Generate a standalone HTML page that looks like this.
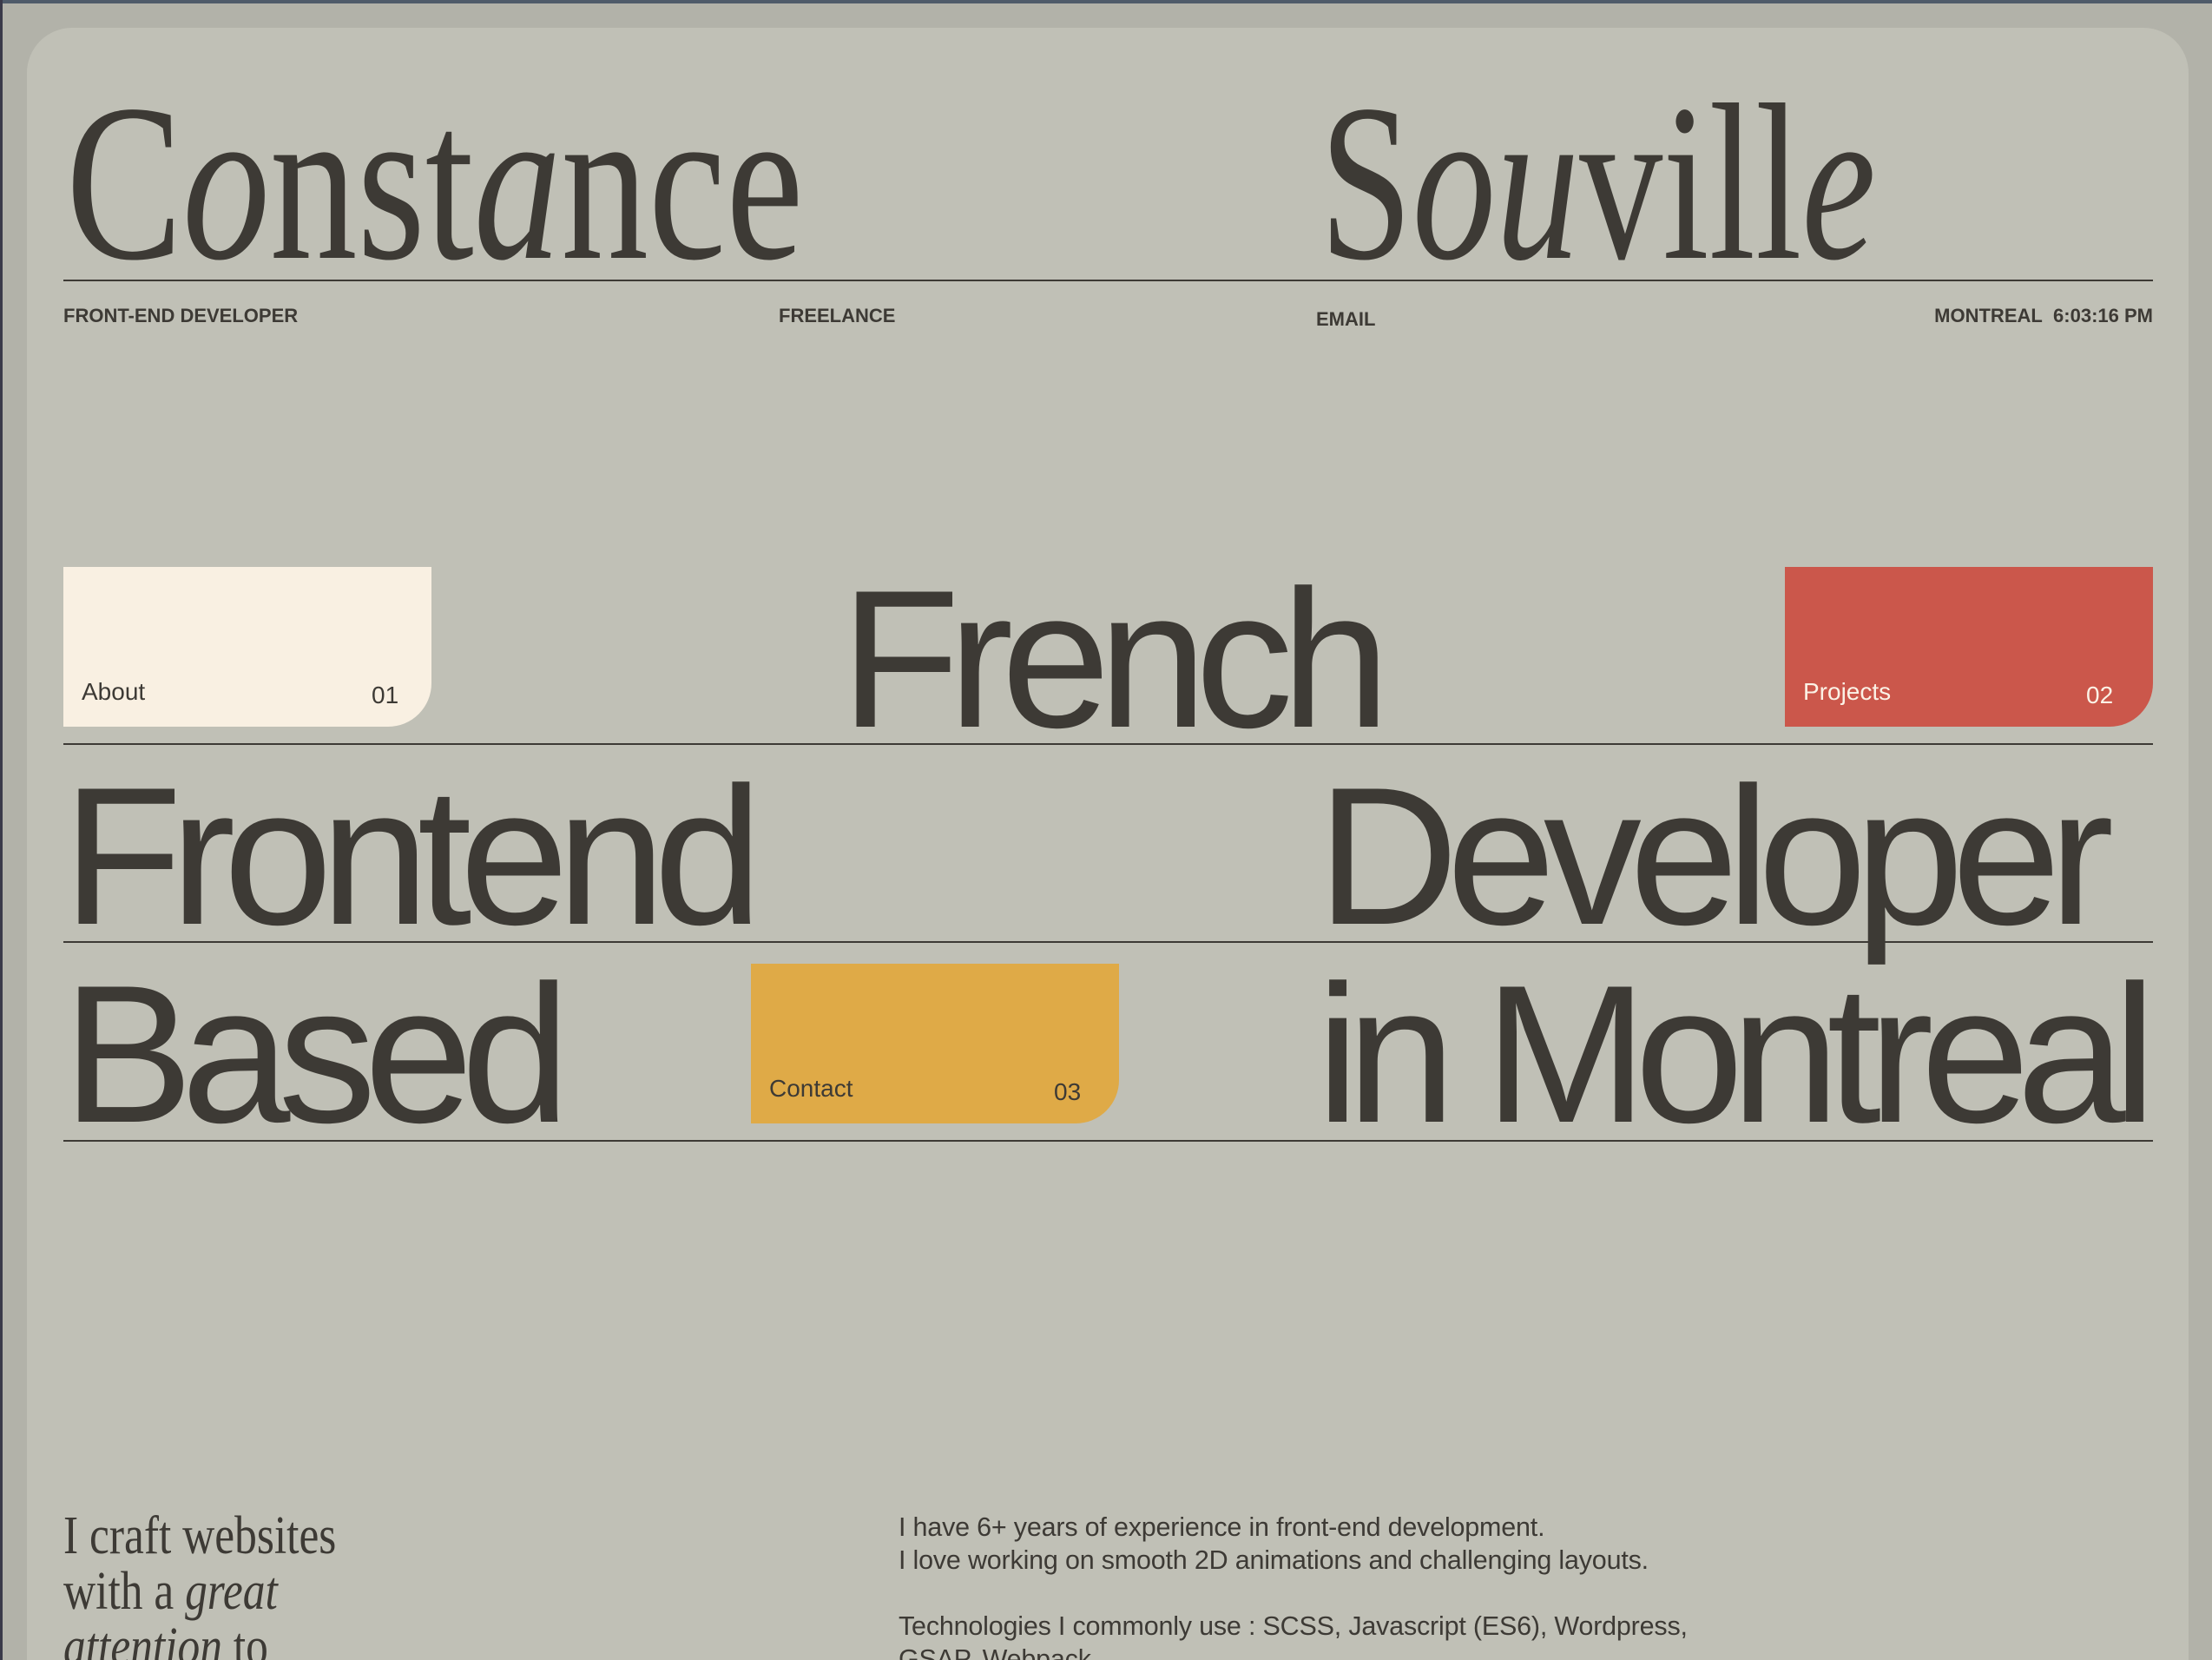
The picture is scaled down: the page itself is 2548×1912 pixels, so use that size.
<!DOCTYPE html>
<html><head><meta charset="utf-8">
<style>
html,body{margin:0;padding:0;width:2548px;height:1912px;overflow:hidden;}
body{background:#b2b2a9;position:relative;color:#3d3a35;font-family:"Liberation Sans",sans-serif;}
.topbar{position:absolute;left:0;top:0;width:2548px;height:4px;background:#4f5b6a;}
.leftbar{position:absolute;left:0;top:0;width:3px;height:1912px;background:#3a3a4a;}
.card{position:absolute;left:31px;top:32px;width:2490px;height:1880px;background:#c0c0b6;border-radius:52px 52px 0 0;}
.a{position:absolute;white-space:nowrap;}
.serif{font-family:"Liberation Serif",serif;}
.big{font-size:258px;line-height:1;transform-origin:0 0;}
.sans{font-size:226px;line-height:1;letter-spacing:-14px;}
.line{position:absolute;left:73px;width:2407px;height:2px;background:#3d3a35;}
.lab{font-size:22px;font-weight:bold;line-height:1;}
.box{position:absolute;width:424px;height:184px;border-bottom-right-radius:50px;}
.box span{position:absolute;font-size:28px;line-height:1;}
.p{font-size:30.5px;line-height:38px;letter-spacing:-0.2px;}
</style></head><body>
<div class="topbar"></div>
<div class="leftbar"></div>
<div class="card"></div>

<div class="a serif big" style="left:76px;top:81px;transform:scaleX(0.78);">C<i>o</i>nst<i>a</i>nce</div>
<div class="a serif big" style="left:1520px;top:81px;transform:scaleX(0.745);">S<i>o</i><i>u</i>vill<i>e</i></div>
<div class="line" style="top:322px;"></div>

<div class="a lab" style="left:73px;top:353px;">FRONT-END DEVELOPER</div>
<div class="a lab" style="left:897px;top:353px;">FREELANCE</div>
<div class="a lab" style="left:1516px;top:357px;">EMAIL</div>
<div class="a lab" style="right:68px;top:353px;">MONTREAL&nbsp;&nbsp;6:03:16 PM</div>

<div class="box" style="left:73px;top:653px;background:#f9f0e2;">
  <span style="left:21px;top:130px;">About</span><span style="left:355px;top:134px;">01</span>
</div>
<div class="box" style="left:2056px;top:653px;background:#cb574b;color:#fbf2e6;">
  <span style="left:21px;top:130px;">Projects</span><span style="left:347px;top:134px;">02</span>
</div>
<div class="a sans" style="left:968px;top:646px;">French</div>
<div class="line" style="top:856px;"></div>

<div class="a sans" style="left:72px;top:873px;">Frontend</div>
<div class="a sans" style="left:1517px;top:873px;">Developer</div>
<div class="line" style="top:1084px;"></div>

<div class="a sans" style="left:72px;top:1101px;">Based</div>
<div class="box" style="left:865px;top:1110px;background:#dfaa47;">
  <span style="left:21px;top:130px;">Contact</span><span style="left:349px;top:134px;">03</span>
</div>
<div class="a sans" style="left:1516px;top:1101px;letter-spacing:-15px;">in Montreal</div>
<div class="line" style="top:1313px;"></div>

<div class="a serif" style="left:73px;top:1737px;font-size:62px;line-height:64px;transform:scaleX(0.83);transform-origin:0 0;">I craft websites<br>with a <i>great</i><br><i>attention</i> to</div>

<div class="a p" style="left:1035px;top:1740px;">I have 6+ years of experience in front-end development.<br>I love working on smooth 2D animations and challenging layouts.<br><br>Technologies I commonly use : SCSS, Javascript (ES6), Wordpress,<br>GSAP, Webpack</div>
</body></html>
